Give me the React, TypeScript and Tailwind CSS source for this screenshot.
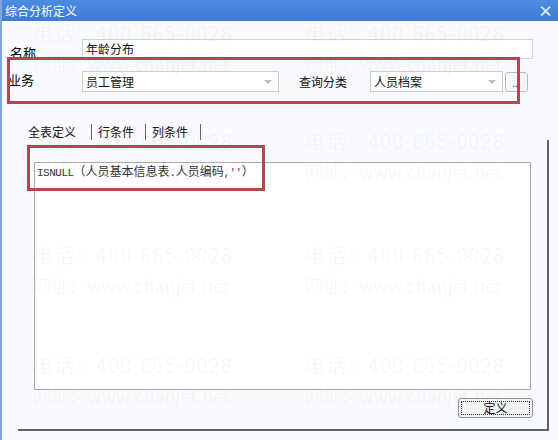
const font = { fontFamily: '"Noto Sans CJK SC", "Noto Sans", sans-serif' }
const mono = { fontFamily: '"Liberation Mono", monospace' }

function Watermark() {
  const rows = [
    { top: 18, cols: [31, 303] },
    { top: 126, cols: [31, 303] },
    { top: 240, cols: [31, 303] },
    { top: 350, cols: [31, 303] },
  ]
  return (
    <div className="pointer-events-none absolute inset-0">
      {rows.map((r) =>
        r.cols.map((x) => (
          <div
            key={`${r.top}-${x}`}
            className="absolute flex flex-col leading-[30px] text-black/[0.045]"
            style={{ top: r.top, left: x }}
          >
            <span className="text-[20px] tracking-[1px]">电话：400-665-0028</span>
            <span className="text-[18px]">网址：www.chanjet.net</span>
          </div>
        ))
      )}
    </div>
  )
}

function Select({ value, width }: { value: string; width: string }) {
  return (
    <div className={`flex h-[21px] items-center justify-between border border-[#c9cdd3] bg-white pl-[3px] pr-[6px] ${width}`}>
      <span className="text-[12px] leading-none text-[#111]">{value}</span>
      <span className="h-0 w-0 border-x-[4px] border-t-[4px] border-x-transparent border-t-[#b9bdc3]" />
    </div>
  )
}

export default function App() {
  return (
    <div className="relative h-[440px] w-[558px] overflow-hidden border-l-2 border-[#7ea6dc] bg-[#f8fafd]" style={font}>
      {/* title bar */}
      <div className="flex h-[21px] items-center justify-between bg-gradient-to-b from-[#4d8ce2] to-[#3d7bd6] pl-[3px] pr-[5px]">
        <span className="text-[12px] leading-none text-white">综合分析定义</span>
        <span className="text-[15px] font-bold leading-none text-[#e8f4ff]">×</span>
      </div>

      {/* name row */}
      <div className="mt-[17px] flex items-center">
        <span className="ml-[8px] w-[72px] pt-[8px] text-[13px] leading-none text-black">名称</span>
        <div className="flex h-[20px] w-[451px] items-start border border-[#cfd3d8] bg-white pl-[3px] pt-[1px] text-[12px] leading-[16px] text-[#111]">
          年龄分布
        </div>
      </div>

      {/* business row */}
      <div className="mt-[12px] flex items-center">
        <span className="ml-[6px] w-[74px] pb-[4px] text-[13px] leading-none text-black">业务</span>
        <Select value="员工管理" width="w-[197px]" />
        <span className="ml-[20px] w-[71px] text-[12px] leading-none text-[#111]">查询分类</span>
        <Select value="人员档案" width="w-[133px]" />
        <div className="ml-[2px] flex h-[20px] w-[23px] items-end justify-center rounded-[3px] border border-[#b5b9c0] bg-[#f6f7f9] pb-[3px] text-[10px] leading-none text-[#333]">
          ...
        </div>
      </div>

      {/* tabs */}
      <div className="mt-[32px] ml-[25px] flex items-center text-[12px] leading-none text-[#111]">
        <span className="px-[1px]">全表定义</span>
        <span className="ml-[14px] h-[16px] w-[2px] border-l border-r border-l-[#666] border-r-white" />
        <span className="ml-[5px]">行条件</span>
        <span className="ml-[11px] h-[16px] w-[2px] border-l border-r border-l-[#666] border-r-white" />
        <span className="ml-[5px]">列条件</span>
        <span className="ml-[12px] h-[16px] w-[2px] border-l border-r border-l-[#666] border-r-white" />
      </div>

      {/* tab page frame */}
      <div className="ml-[16px] flex h-[291px] w-[531px] flex-col border-b-2 border-r-2 border-b-[#5f6266] border-r-[#5f6266] pt-[22px]">
        <div className="ml-[16px] h-[228px] w-[497px] border border-[#a9adb3] bg-white px-[2px] pt-[1px]">
          <div className="text-[12px] leading-[14px] text-[#333]">
            <span style={mono} className="text-[11px] tracking-[-0.5px]">ISNULL</span>
            （人员基本信息表
            <span style={mono} className="text-[10px]">.</span>
            人员编码
            <span style={mono} className="text-[10px]">,''</span>
            ）
          </div>
        </div>
        <div className="mt-[8px] ml-[440px] flex h-[20px] w-[75px] items-center justify-center rounded-[3px] border border-[#8e9299] bg-[#f3f4f6] p-[2px]">
          <div className="flex h-full w-full items-center justify-center border border-dotted border-[#333] text-[12px] leading-none text-[#111]">
            定义
          </div>
        </div>
      </div>

      <Watermark />

      {/* highlight boxes */}
      <div className="pointer-events-none absolute left-[5px] top-[57px] h-[47px] w-[513px] border-[3px] border-[#b3474d]" />
      <div className="pointer-events-none absolute left-[25px] top-[145px] h-[46px] w-[238px] border-[3px] border-[#b3474d]" />
    </div>
  )
}
